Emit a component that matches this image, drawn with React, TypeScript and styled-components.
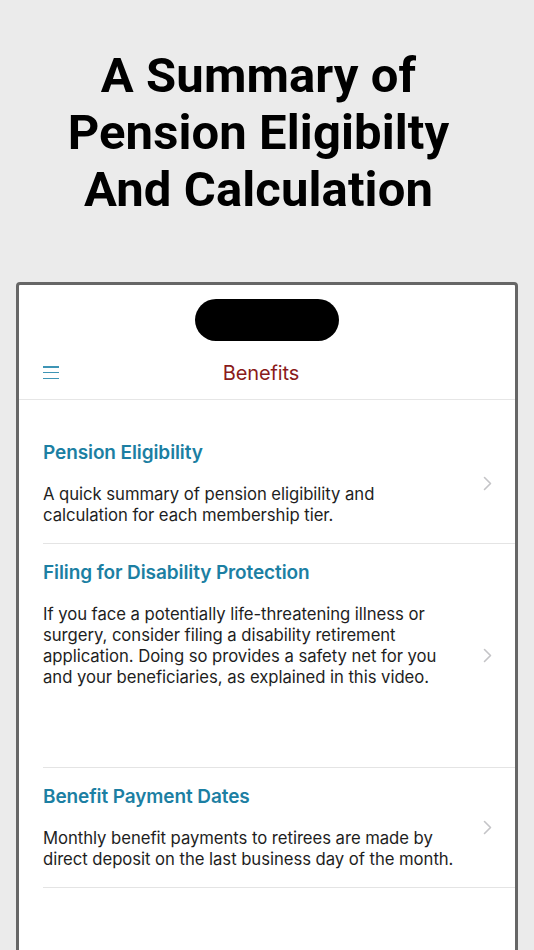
import React from "react";
import styled, { createGlobalStyle } from "styled-components";

const Global = createGlobalStyle`
  html, body { margin: 0; padding: 0; background: #ebebeb; }
  body { overflow: hidden; height: 950px; }
  * { box-sizing: border-box; }
`;

const Page = styled.div`
  width: 534px;
  height: 950px;
  overflow: hidden;
  background: #ebebeb;
  display: flex;
  flex-direction: column;
`;

const Headline = styled.h1`
  margin: 0;
  padding: 47px 17px 0 0;
  height: 282px;
  flex-shrink: 0;
  font-family: Roboto, "Liberation Sans", sans-serif;
  font-weight: 700;
  font-size: 49px;
  line-height: 57px;
  text-align: center;
  color: #000;
  letter-spacing: 0.1px;
`;

const Phone = styled.div`
  margin: 0 16px;
  height: 720px;
  border: 3px solid #666;
  border-radius: 4px 4px 0 0;
  background: #fff;
  display: flex;
  flex-direction: column;
  flex-shrink: 0;
`;

const StatusArea = styled.div`
  height: 56px;
  display: flex;
  justify-content: center;
  padding-top: 14px;
`;

const Island = styled.div`
  width: 144px;
  height: 42px;
  border-radius: 21px;
  background: #000;
`;

const NavBar = styled.div`
  height: 59px;
  display: flex;
  align-items: center;
  justify-content: center;
  position: relative;
  border-bottom: 1px solid #e6e6e6;
  padding-top: 6px;
`;

const MenuButton = styled.button`
  position: absolute;
  left: 24px;
  top: 25px;
  width: 16px;
  height: 13px;
  padding: 0;
  border: 0;
  background: transparent;
  display: flex;
  flex-direction: column;
  justify-content: space-between;
`;

const MenuLine = styled.span`
  display: block;
  height: 1.5px;
  width: 16px;
  background: #3e95b5;
`;

const NavTitle = styled.div`
  font-family: Inter, "Liberation Sans", sans-serif;
  font-size: 20px;
  font-weight: 400;
  color: #8a1b1b;
  letter-spacing: -0.1px;
  margin-right: 12px;
`;

const List = styled.div`
  padding-top: 24px;
  display: flex;
  flex-direction: column;
`;

const Row = styled.div`
  margin-left: 24px;
  display: flex;
  align-items: center;
  border-bottom: 1px solid #e4e4e4;
  padding: 17px 0;
`;

const RowText = styled.div<{ $extra?: number }>`
  width: 416px;
  display: flex;
  flex-direction: column;
  gap: 19px;
  padding-bottom: ${(p) => p.$extra ?? 0}px;
`;

const RowTitle = styled.div`
  font-family: Inter, "Liberation Sans", sans-serif;
  font-size: 19px;
  font-weight: 600;
  line-height: 24px;
  color: #1c7fa3;
  letter-spacing: -0.1px;
`;

const RowBody = styled.div`
  font-family: Inter, "Liberation Sans", sans-serif;
  font-size: 16.7px;
  line-height: 21px;
  color: #1e1e1e;
  letter-spacing: -0.05px;
`;

const Chevron = styled.svg`
  margin-left: 24px;
  flex-shrink: 0;
  align-self: center;
`;

const items = [
  {
    title: "Pension Eligibility",
    body: "A quick summary of pension eligibility and calculation for each membership tier.",
    extra: 0,
  },
  {
    title: "Filing for Disability Protection",
    body: "If you face a potentially life-threatening illness or surgery, consider filing a disability retirement application. Doing so provides a safety net for you and your beneficiaries, as explained in this video.",
    extra: 62,
  },
  {
    title: "Benefit Payment Dates",
    body: "Monthly benefit payments to retirees are made by direct deposit on the last business day of the month.",
    extra: 0,
  },
];

export default function App() {
  return (
    <Page>
      <Global />
      <Headline>
        A Summary of
        <br />
        Pension Eligibilty
        <br />
        And Calculation
      </Headline>
      <Phone>
        <StatusArea>
          <Island />
        </StatusArea>
        <NavBar>
          <MenuButton aria-label="menu">
            <MenuLine />
            <MenuLine />
            <MenuLine />
          </MenuButton>
          <NavTitle>Benefits</NavTitle>
        </NavBar>
        <List>
          {items.map((it) => (
            <Row key={it.title}>
              <RowText $extra={it.extra}>
                <RowTitle>{it.title}</RowTitle>
                <RowBody>{it.body}</RowBody>
              </RowText>
              <Chevron width="9" height="15" viewBox="0 0 9 15">
                <path d="M1.5 1.5 L7.5 7.5 L1.5 13.5" fill="none" stroke="#c4c4c7" strokeWidth="1.6" strokeLinecap="round" strokeLinejoin="round" />
              </Chevron>
            </Row>
          ))}
        </List>
      </Phone>
    </Page>
  );
}
